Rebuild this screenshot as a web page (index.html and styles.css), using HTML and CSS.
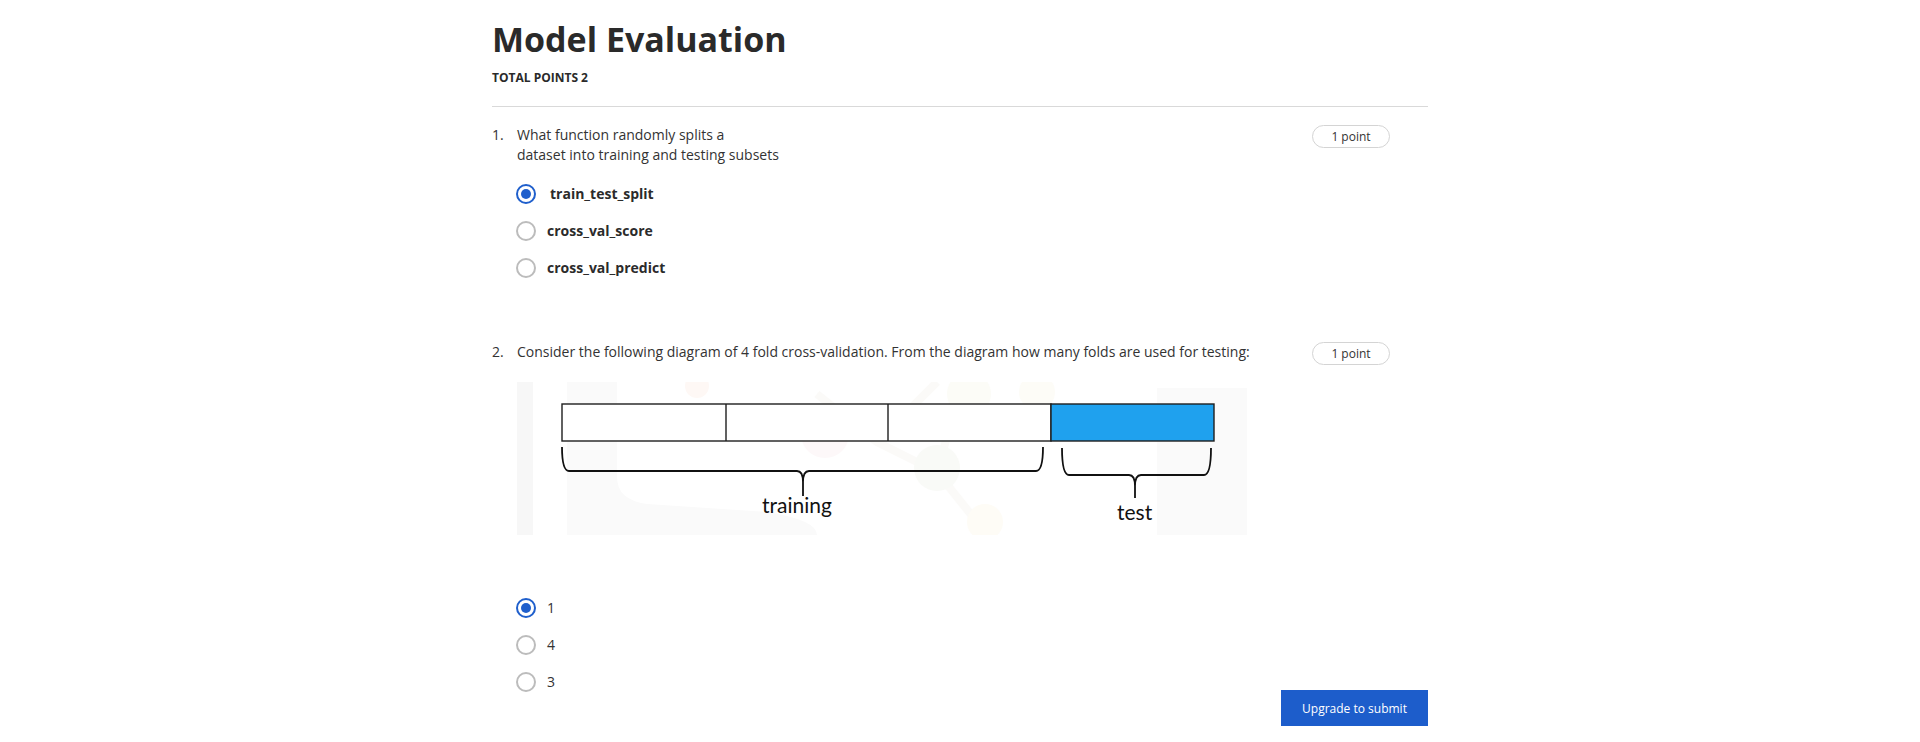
FILE: index.html
```html
<!DOCTYPE html>
<html lang="en">
<head>
<meta charset="utf-8">
<title>Model Evaluation</title>
<link rel="stylesheet" href="styles.css">
</head>
<body>
<main class="page">
  <header class="head">
    <h1 class="title">Model Evaluation</h1>
    <div class="total">TOTAL POINTS 2</div>
  </header>
  <hr class="divider">

  <section class="question q1">
    <div class="qrow">
      <span class="num">1.</span>
      <div class="qtext">What function randomly splits a<br>dataset into training and testing subsets</div>
      <span class="pill">1 point</span>
    </div>
    <ul class="options">
      <li class="option"><span class="radio checked"></span><span class="label bold sel">train_test_split</span></li>
      <li class="option"><span class="radio"></span><span class="label bold">cross_val_score</span></li>
      <li class="option"><span class="radio"></span><span class="label bold">cross_val_predict</span></li>
    </ul>
  </section>

  <section class="question q2">
    <div class="qrow">
      <span class="num">2.</span>
      <div class="qtext">Consider the following diagram of 4 fold cross-validation. From the diagram how many folds are used for testing:</div>
      <span class="pill">1 point</span>
    </div>
    <div class="figure">
      <svg class="diagram" width="731" height="153" viewBox="0 0 731 153" xmlns="http://www.w3.org/2000/svg">
        <g class="wm">
          <rect x="0" y="0" width="16" height="153" fill="#f7f7f7"/>
          <path d="M50 0 H100 V95 Q100 118 130 122 L250 130 Q300 138 300 153 H50 Z" fill="#fafafa"/>
          <rect x="640" y="6" width="90" height="147" fill="#fafafa"/>
          <path d="M300 12 L360 60 L420 90 L460 140 M420 90 L440 20 M360 60 L420 0" stroke="#fbfaf8" stroke-width="8" fill="none"/>
          <circle cx="308" cy="52" r="24" fill="#fdf8f9"/>
          <circle cx="420" cy="86" r="23" fill="#f9faf7"/>
          <circle cx="468" cy="140" r="18" fill="#fefcf6"/>
          <circle cx="452" cy="12" r="22" fill="#fcfcf7"/>
          <circle cx="180" cy="4" r="12" fill="#fef8f5"/>
          <circle cx="520" cy="10" r="18" fill="#fdfcf7"/>
        </g>
        <g stroke="#1e1e1e" stroke-width="1.4">
          <rect x="45" y="22" width="489" height="37" fill="#ffffff"/>
          <rect x="534" y="22" width="163" height="37" fill="#1fa1ee"/>
          <line x1="209" y1="22" x2="209" y2="59"/>
          <line x1="371" y1="22" x2="371" y2="59"/>
        </g>
        <g stroke="#111" stroke-width="1.8" fill="none">
          <path d="M45 65 Q45 89 52 89 H280 Q286 89 286 100 V114 M286 100 Q286 89 292 89 H519 Q526 89 526 65"/>
          <path d="M545 66 Q545 93 552 93 H612 Q618 93 618 104 V116 M618 104 Q618 93 624 93 H687 Q694 93 694 66"/>
        </g>
        <text x="245" y="131" class="dtext">training</text>
        <text x="600" y="138" class="dtext">test</text>
      </svg>
    </div>
    <ul class="options">
      <li class="option"><span class="radio checked"></span><span class="label">1</span></li>
      <li class="option"><span class="radio"></span><span class="label">4</span></li>
      <li class="option"><span class="radio"></span><span class="label">3</span></li>
    </ul>
  </section>

  <div class="submit-row">
    <button class="submit" type="button">Upgrade to submit</button>
  </div>
</main>
</body>
</html>
```
FILE: styles.css
```css
* { box-sizing: border-box; }

html, body {
  margin: 0;
  padding: 0;
  background: #ffffff;
}

body {
  font-family: "Open Sans", "Noto Sans", sans-serif;
  color: #333333;
}

.page {
  width: 936px;
  margin: 0 auto;
  display: flex;
  flex-direction: column;
}

.head {
  padding-top: 17px;
}

.title {
  margin: 0;
  font-size: 34px;
  line-height: 44px;
  font-weight: 700;
  color: #2a2a2a;
}

.total {
  margin-top: 9px;
  font-size: 12px;
  line-height: 16px;
  font-weight: 700;
  color: #2a2a2a;
}

.divider {
  margin: 20px 0 0 0;
  border: 0;
  height: 1px;
  background: #d9d9d9;
}

.question {
  display: flex;
  flex-direction: column;
}

.q1 { margin-top: 18px; }
.q2 { margin-top: 64px; }

.qrow {
  display: flex;
  align-items: flex-start;
}

.num {
  width: 25px;
  flex: none;
  font-size: 14px;
  line-height: 20px;
  color: #333;
}

.qtext {
  flex: 1;
  font-size: 14px;
  line-height: 20px;
  color: #333;
}

.pill {
  flex: none;
  width: 78px;
  height: 23px;
  margin-right: 38px;
  border: 1px solid #d4d4d4;
  border-radius: 12px;
  font-size: 12px;
  line-height: 21px;
  text-align: center;
  color: #333;
}

.options {
  list-style: none;
  margin: 19px 0 0 0;
  padding: 0 0 0 24px;
  display: flex;
  flex-direction: column;
  gap: 17px;
}

.q2 .options { margin-top: 63px; }

.option {
  display: flex;
  align-items: center;
  height: 20px;
  gap: 11px;
}

.radio {
  flex: none;
  width: 20px;
  height: 20px;
  border-radius: 50%;
  border: 2px solid #bcbcbc;
  display: flex;
  align-items: center;
  justify-content: center;
}

.radio.checked {
  border-color: #1f5fcc;
}

.radio.checked::after {
  content: "";
  width: 10px;
  height: 10px;
  border-radius: 50%;
  background: #1f5fcc;
}

.label {
  font-size: 14px;
  line-height: 20px;
  color: #333;
}

.label.bold {
  font-weight: 700;
  color: #2b2b2b;
}

.label.sel {
  padding-left: 3px;
}

.figure {
  margin-top: 17px;
  padding-left: 25px;
  height: 153px;
}

.diagram {
  display: block;
}

.dtext {
  font-family: "Lato", "Open Sans", sans-serif;
  font-size: 21px;
  fill: #111;
}

.submit-row {
  display: flex;
  justify-content: flex-end;
  margin-top: -2px;
}

.submit {
  width: 147px;
  height: 36px;
  border: 0;
  border-radius: 0;
  background: #1d5dcb;
  color: #ffffff;
  font-family: "Open Sans", sans-serif;
  font-size: 12px;
  padding: 0;
}
```
